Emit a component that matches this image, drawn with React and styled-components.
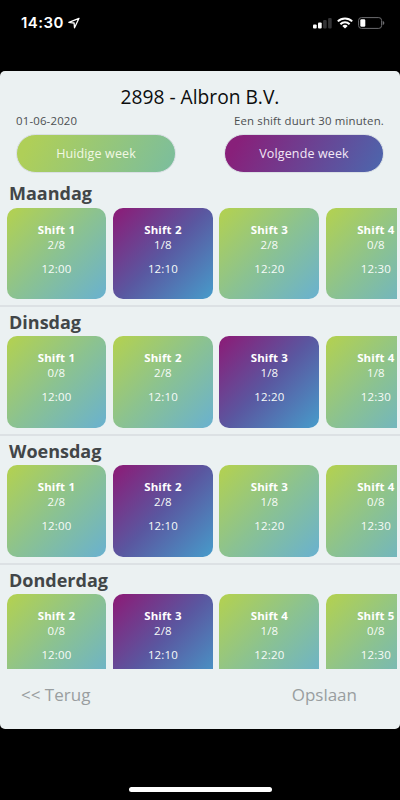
import React from "react";
import styled, { createGlobalStyle } from "styled-components";

const GlobalStyle = createGlobalStyle`
  * {
    box-sizing: border-box;
  }
  body {
    margin: 0;
    background: #000;
    font-family: "Open Sans", sans-serif;
  }
`;

const Phone = styled.div`
  width: 400px;
  height: 800px;
  display: flex;
  flex-direction: column;
  background: #000;
  overflow: hidden;
`;

const StatusBar = styled.header`
  height: 71px;
  padding: 13px 15px 0 21px;
  display: flex;
  justify-content: space-between;
  align-items: flex-start;
  color: #fff;
`;

const StatusGroup = styled.div`
  height: 20px;
  display: flex;
  align-items: center;
  gap: ${(props) => props.$gap}px;
`;

const Clock = styled.span`
  font-family: Inter, sans-serif;
  font-size: 15px;
  font-weight: 600;
  line-height: 20px;
  letter-spacing: 0.45px;
`;

const Sheet = styled.main`
  height: 657.5px;
  display: flex;
  flex-direction: column;
  background: #ebf1f2;
  border-radius: 5px;
  overflow: hidden;
`;

const Title = styled.h1`
  margin: 13px 0 0;
  font-size: 19.2px;
  font-weight: 400;
  line-height: 26px;
  text-align: center;
  color: #0c0d0d;
`;

const Info = styled.div`
  height: 16px;
  margin-top: 3px;
  padding: 0 16px;
  display: flex;
  justify-content: space-between;
  font-size: 11.4px;
  line-height: 15px;
  letter-spacing: 0.18px;
  color: #4b4f51;
`;

const Weeks = styled.div`
  padding: 5px 16px 0;
  display: flex;
  justify-content: space-between;
`;

const WeekButton = styled.button`
  width: 160px;
  height: 39px;
  padding: 0;
  border: 1px solid #d9dfe4;
  border-radius: 20px;
  background: ${(props) =>
    props.$active
      ? "linear-gradient(120deg, #88207a 10%, #4b68ae 100%)"
      : "linear-gradient(120deg, #afcf58 10%, #7abd9f 100%)"};
  background-origin: border-box;
  color: ${(props) => (props.$active ? "#f3e8f6" : "#f2f8e4")};
  font-family: inherit;
  font-size: 12.5px;
  letter-spacing: 0.13px;
`;

const Days = styled.div`
  height: 491px;
  margin-top: 5px;
  overflow: hidden;
`;

const Day = styled.section`
  height: 128.9px;
  border-bottom: 2px solid #dce1e4;
`;

const DayName = styled.h2`
  margin: 0;
  padding: 4px 0 0 9px;
  height: 29.5px;
  font-size: 18px;
  font-weight: 700;
  line-height: 23px;
  color: #424648;
`;

const Shifts = styled.div`
  margin: 0 3px 0 6.5px;
  display: flex;
  gap: 6.7px;
  overflow: hidden;
`;

const Shift = styled.div`
  flex: 0 0 99.8px;
  height: 91.8px;
  padding-top: 14px;
  border-radius: 10px;
  background: ${(props) =>
    props.$selected
      ? "linear-gradient(135deg, #88207a 5%, #5a57a0 50%, #479ccb 100%)"
      : "linear-gradient(135deg, #b0d055 5%, #8bc291 50%, #69b1d0 100%)"};
  color: #f7fbf8;
  font-size: 11.45px;
  line-height: 15px;
  letter-spacing: 0.17px;
  text-align: center;
`;

const ShiftName = styled.div`
  font-weight: 700;
  color: #fff;
`;

const Time = styled.div`
  margin-top: 9px;
`;

const Footer = styled.footer`
  padding: 14px 43px 0 21px;
  display: flex;
  justify-content: space-between;
`;

const FooterButton = styled.button`
  padding: 0;
  border: 0;
  background: none;
  color: #999ea0;
  font-family: inherit;
  font-size: 17px;
  line-height: 24px;
`;

const HomeIndicator = styled.div`
  width: 143px;
  height: 5px;
  margin: 58.5px auto 0;
  border-radius: 3px;
  background: #fff;
`;

const days = [
  { name: "Maandag", first: 1, selected: 1, taken: [2, 1, 2, 0] },
  { name: "Dinsdag", first: 1, selected: 2, taken: [0, 2, 1, 1] },
  { name: "Woensdag", first: 1, selected: 1, taken: [2, 2, 1, 0] },
  { name: "Donderdag", first: 2, selected: 1, taken: [0, 2, 1, 0] },
];

const times = ["12:00", "12:10", "12:20", "12:30"];

const LocationIcon = () => (
  <svg width="12" height="12" viewBox="0 0 12 12">
    <path
      d="M11 1.3.9 5.4l5.2.6.4 4.8z"
      fill="none"
      stroke="#fff"
      strokeWidth="1.3"
      strokeLinejoin="round"
    />
  </svg>
);

const SignalIcon = () => (
  <svg width="19" height="12" viewBox="0 0 19 12">
    <rect x="0" y="7.5" width="3.7" height="4" rx="1" fill="#fff" />
    <rect x="5" y="5.5" width="3.7" height="6" rx="1" fill="#fff" />
    <rect x="10.1" y="3" width="3.6" height="8.5" rx="1" fill="#333335" />
    <rect x="15.1" y="1" width="3.6" height="10.5" rx="1" fill="#333335" />
  </svg>
);

const WifiIcon = () => (
  <svg width="16" height="12" viewBox="0 0 16 12">
    <g fill="none" stroke="#fff" strokeWidth="2">
      <path d="M.8 4.4a10.3 10.3 0 0 1 14.4 0" />
      <path d="M3.4 7.2a6.6 6.6 0 0 1 9.2 0" />
    </g>
    <path d="M5.3 8.9a4 4 0 0 1 5.4 0L8 11.6z" fill="#fff" />
  </svg>
);

const BatteryIcon = () => (
  <svg width="27" height="12" viewBox="0 0 27 12">
    <rect
      x=".6"
      y=".6"
      width="23"
      height="10.8"
      rx="2.8"
      fill="none"
      stroke="#6c6c6f"
      strokeWidth="1"
    />
    <rect x="2.3" y="2.2" width="5" height="7.6" rx="1.2" fill="#fff" />
    <path d="M24.7 4v4c1-.3 1.6-1.1 1.6-2s-.6-1.7-1.6-2z" fill="#6c6c6f" />
  </svg>
);

const App = () => {
  return (
    <>
      <GlobalStyle />
      <Phone>
        <StatusBar>
          <StatusGroup $gap={4}>
            <Clock>14:30</Clock>
            <LocationIcon />
          </StatusGroup>
          <StatusGroup $gap={5}>
            <SignalIcon />
            <WifiIcon />
            <BatteryIcon />
          </StatusGroup>
        </StatusBar>
        <Sheet>
          <Title>2898 - Albron B.V.</Title>
          <Info>
            <span>01-06-2020</span>
            <span>Een shift duurt 30 minuten.</span>
          </Info>
          <Weeks>
            <WeekButton>Huidige week</WeekButton>
            <WeekButton $active>Volgende week</WeekButton>
          </Weeks>
          <Days>
            {days.map((day) => (
              <Day key={day.name}>
                <DayName>{day.name}</DayName>
                <Shifts>
                  {times.map((time, i) => (
                    <Shift key={time} $selected={i === day.selected}>
                      <ShiftName>Shift {day.first + i}</ShiftName>
                      <div>{day.taken[i]}/8</div>
                      <Time>{time}</Time>
                    </Shift>
                  ))}
                </Shifts>
              </Day>
            ))}
          </Days>
          <Footer>
            <FooterButton>&lt;&lt; Terug</FooterButton>
            <FooterButton>Opslaan</FooterButton>
          </Footer>
        </Sheet>
        <HomeIndicator />
      </Phone>
    </>
  );
};

export default App;
